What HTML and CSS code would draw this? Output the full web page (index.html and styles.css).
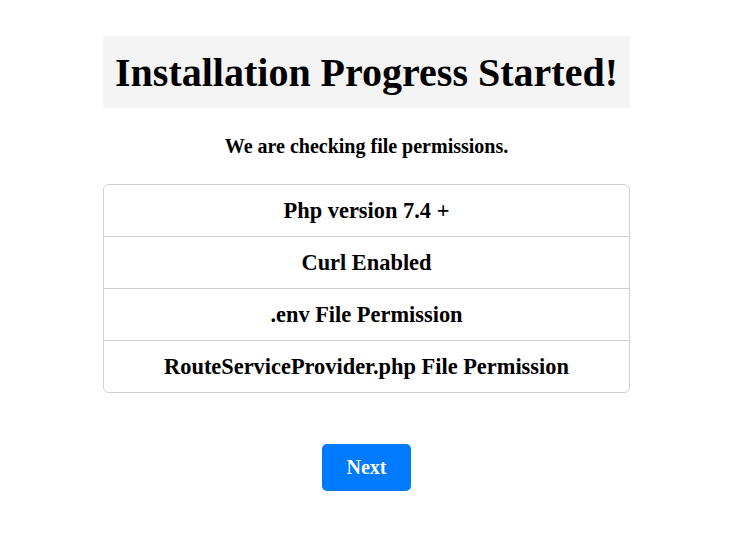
FILE: index.html
```html
<!DOCTYPE html>
<html lang="en">
<head>
    <meta charset="UTF-8">
    <meta name="viewport" content="width=device-width, initial-scale=1.0">
    <title>Installation</title>
    <link rel="stylesheet" href="styles.css">
</head>
<body>
    <div class="container">
        <div class="header">
            <h1>Installation Progress Started!</h1>
        </div>
        <p class="subtitle">We are checking file permissions.</p>
        <ul class="check-list">
            <li>Php version 7.4 +</li>
            <li>Curl Enabled</li>
            <li>.env File Permission</li>
            <li>RouteServiceProvider.php File Permission</li>
        </ul>
        <div class="actions">
            <button class="next-btn">Next</button>
        </div>
    </div>
</body>
</html>
```

FILE: styles.css
```css
body {
    font-family: "Liberation Serif", "Times New Roman", serif;
    margin: 0;
    padding: 0 8px 0 0;
    background-color: #fff;
    color: #000;
}
.container {
    width: 527px;
    margin: 36px auto 0;
}
.header {
    background-color: #f4f4f4;
    text-align: center;
    height: 72px;
    display: flex;
    align-items: center;
    justify-content: center;
}
.header h1 {
    margin: 0;
    font-size: 40px;
    font-weight: bold;
}
.subtitle {
    text-align: center;
    font-weight: bold;
    font-size: 20px;
    margin: 27px 0 26px;
}
.check-list {
    list-style-type: none;
    margin: 0;
    padding: 0;
    border: 1px solid #d0d0d0;
    border-radius: 6px;
}
.check-list li {
    height: 51px;
    display: flex;
    align-items: center;
    justify-content: center;
    font-size: 22.4px;
    font-weight: bold;
    border-top: 1px solid #d0d0d0;
}
.check-list li:first-child {
    border-top: none;
}
.actions {
    text-align: center;
    margin-top: 51px;
}
.next-btn {
    width: 89px;
    height: 47px;
    background-color: #007bff;
    color: #fff;
    border: none;
    border-radius: 5px;
    font-family: inherit;
    font-size: 20px;
    font-weight: bold;
    cursor: pointer;
}
```
